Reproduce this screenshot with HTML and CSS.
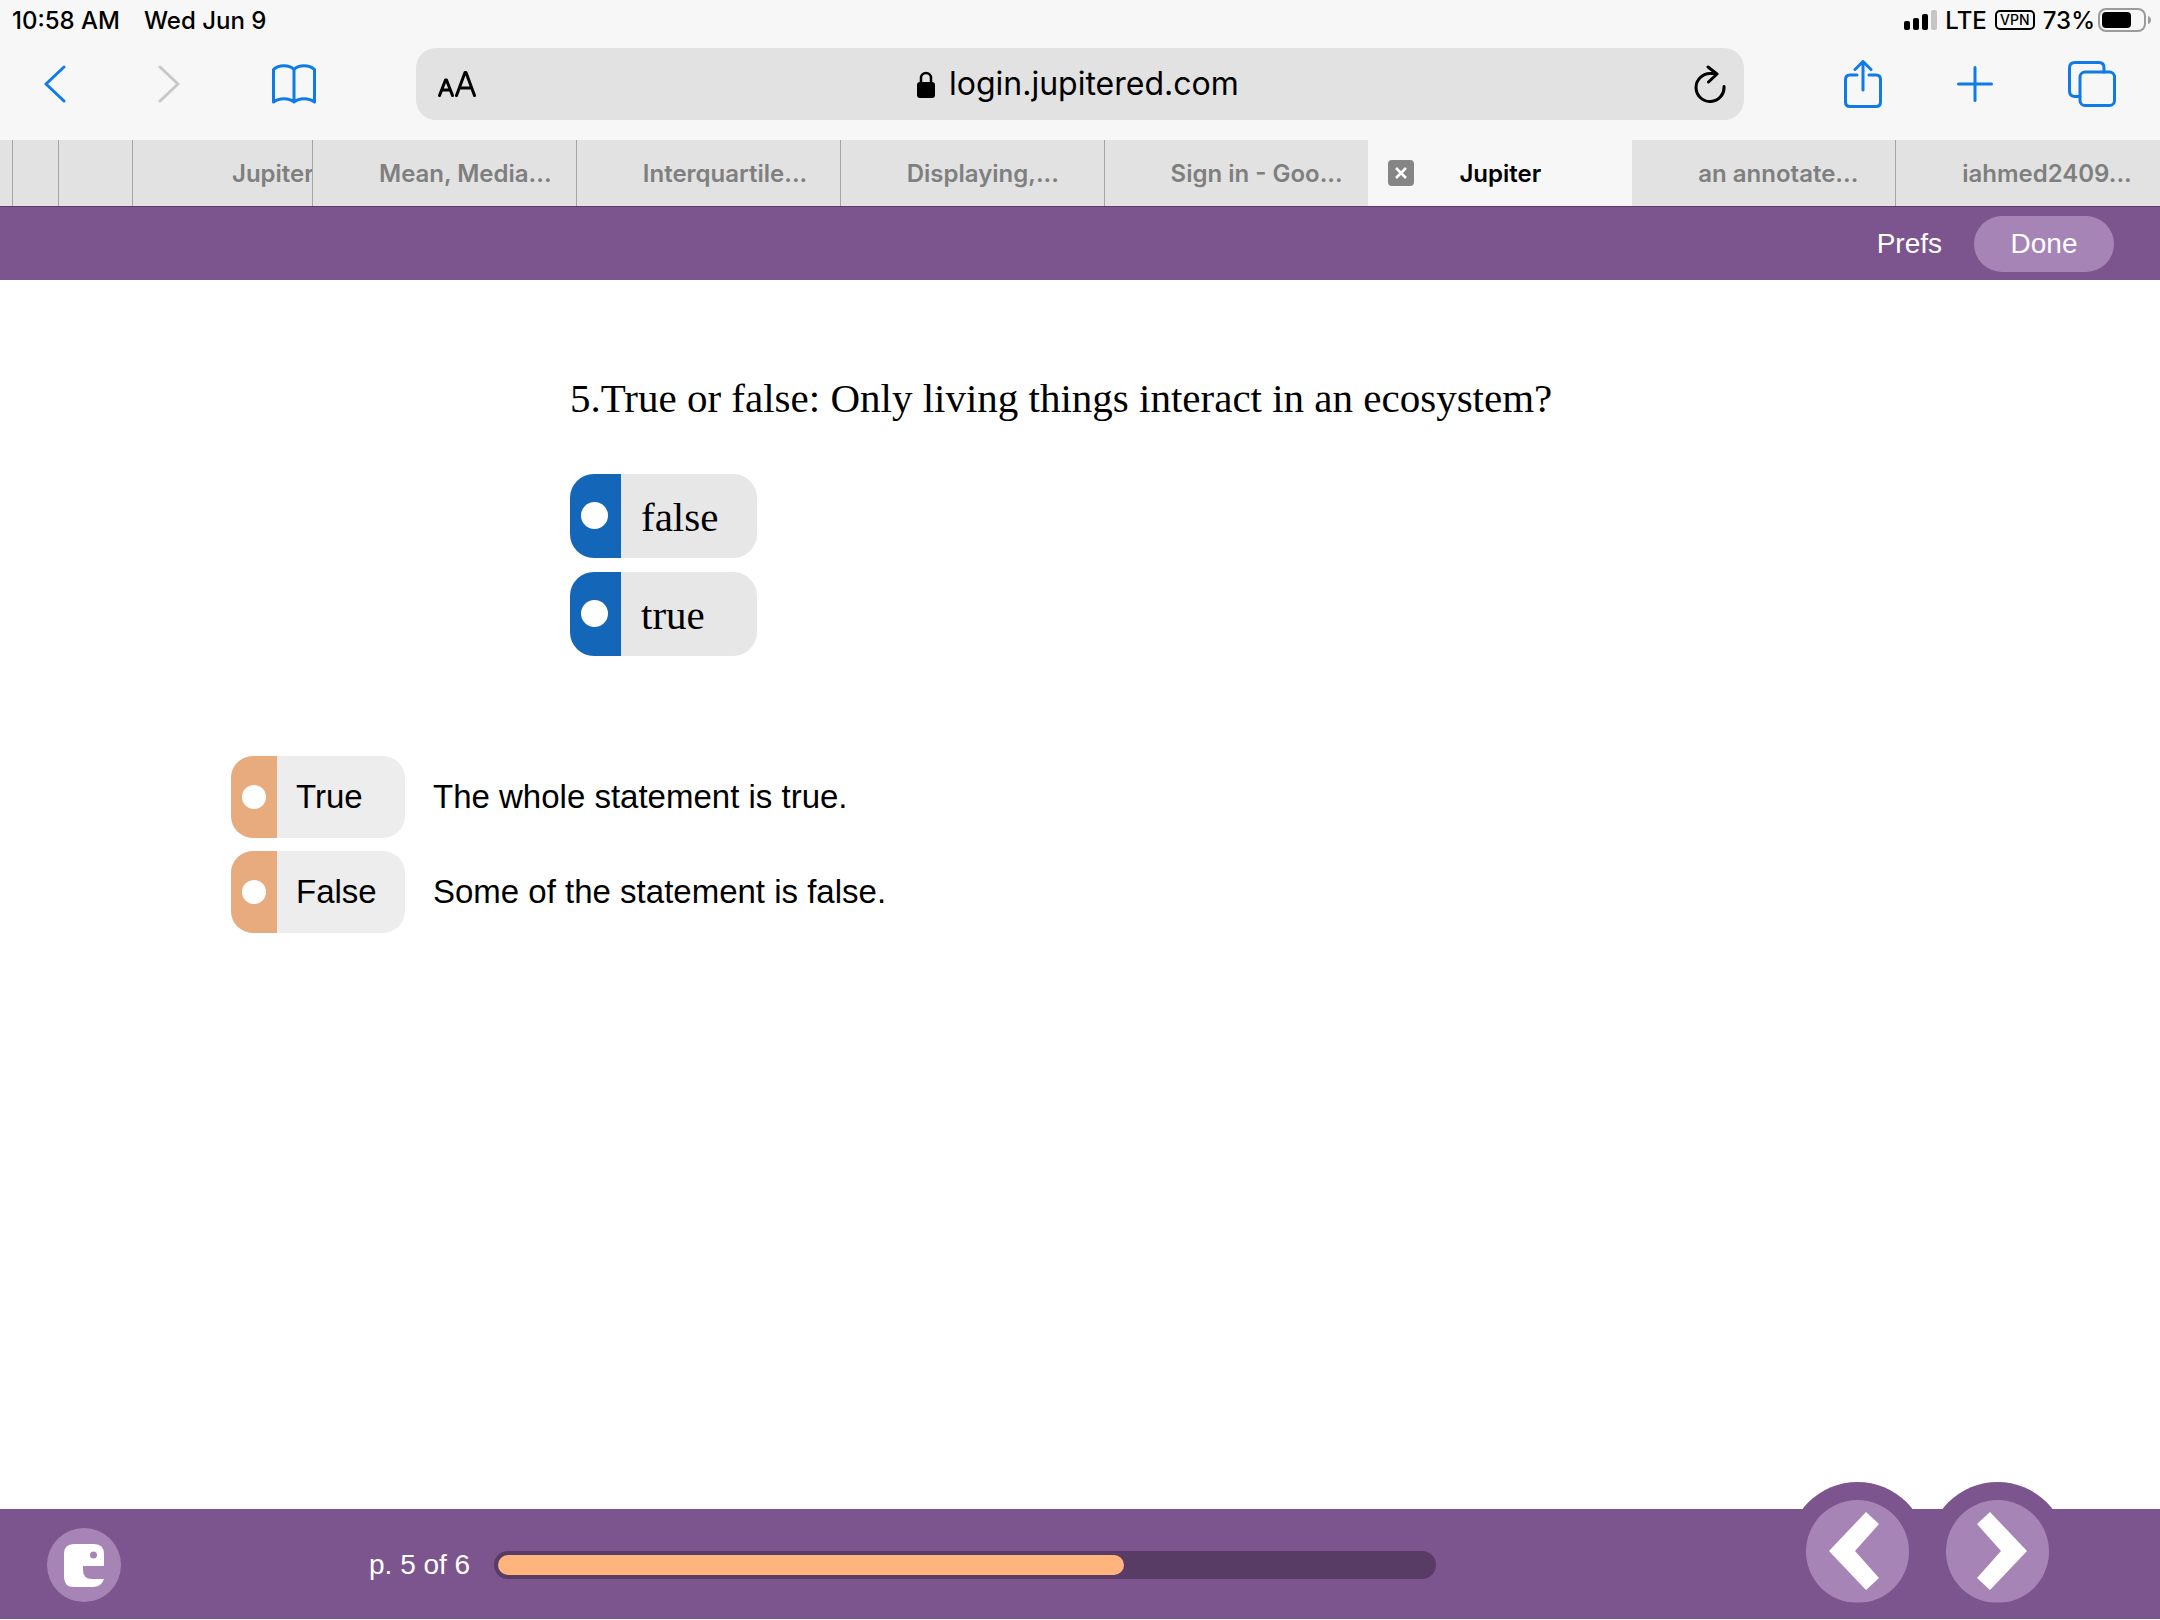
FILE: index.html
```html
<!DOCTYPE html>
<html lang="en">
<head>
<meta charset="utf-8">
<title>Jupiter</title>
<link rel="stylesheet" href="styles.css">
</head>
<body>
<div class="app">
  <div class="status">
    <span>10:58 AM</span>
    <span class="date">Wed Jun 9</span>
    <div class="indicators">
      <svg class="signal" width="33" height="20" viewBox="0 0 33 20" aria-hidden="true">
        <rect x="0" y="11" width="6" height="9" rx="2"/><rect x="9" y="8" width="6" height="12" rx="2"/><rect x="18" y="4" width="6" height="16" rx="2"/><rect x="27" y="0" width="6" height="20" rx="2" fill="#c5c5c6"/>
      </svg>
      <span class="lte">LTE</span>
      <span class="vpn">VPN</span>
      <span>73%</span>
      <svg class="battery" width="54" height="24" viewBox="0 0 54 24" aria-hidden="true">
        <rect x="1" y="1" width="46" height="22" rx="7" fill="none" stroke="#9b9b9c" stroke-width="2"/><rect x="4" y="4" width="29" height="16" rx="4"/><path d="M50 8q3 1 3 4t-3 4z" fill="#9b9b9c"/>
      </svg>
    </div>
  </div>

  <div class="toolbar">
    <button class="icon back" aria-label="Back"><svg width="22" height="38" viewBox="0 0 22 38"><path d="M20 2 2 19l18 17"/></svg></button>
    <button class="icon forward" aria-label="Forward"><svg width="22" height="38" viewBox="0 0 22 38"><path d="m2 2 18 17L2 36"/></svg></button>
    <button class="icon book" aria-label="Bookmarks"><svg width="44" height="40" viewBox="0 0 44 40"><path d="M22 5.500C17 .5 7 .5 1.500 5.500V38C7 33.500 17 33.500 22 38 27 33.500 37 33.500 42.500 38V5.500C37 .5 27 .5 22 5.500V38"/></svg></button>
    <div class="address">
      <button class="icon reader" aria-label="Text size"><svg width="38" height="26" viewBox="0 0 38 26"><path d="M1.500 24.500 7.500 9h1l6 15.500M4 19h8"/><path d="M18.500 24.500 27 1.500h1l8.500 23M21.500 17h12"/></svg></button>
      <svg class="lock" width="18" height="27" viewBox="0 0 18 27" aria-hidden="true"><path d="M4 12V7a5 5 0 0 1 10 0v5" fill="none" stroke="#000" stroke-width="2.500"/><rect y="11" width="18" height="16" rx="3"/></svg>
      <input class="url" aria-label="Address" value="login.jupitered.com">
      <button class="icon reload" aria-label="Reload"><svg width="32" height="38" viewBox="0 0 32 38"><path d="M30 21.500A14 14 0 1 1 16 8.500h6.500M14 2l9 7-8.500 8"/></svg></button>
    </div>
    <button class="icon share" aria-label="Share"><svg width="38" height="48" viewBox="0 0 38 48"><path d="M13 15H6q-4.500 0-4.500 4.500V42q0 4.500 4.500 4.500h26q4.500 0 4.500-4.500V19.500Q36.500 15 32 15h-7M19 30V2M11 9.500 19 1.500l8 8"/></svg></button>
    <button class="icon plus" aria-label="New tab"><svg width="36" height="36" viewBox="0 0 36 36"><path d="M1.500 18h33M18 1.500v33"/></svg></button>
    <button class="icon all" aria-label="Show all tabs"><svg width="48" height="46" viewBox="0 0 48 46"><path d="M12 35.500H7Q1.500 35.500 1.500 30V7Q1.500 1.500 7 1.500h24Q36 1.500 36 7v4"/><rect x="12" y="11" width="34.500" height="33.500" rx="5"/></svg></button>
  </div>

  <nav class="tabs" aria-label="Open tabs">
    <span class="tab edge"></span>
    <span class="tab stack"></span>
    <span class="tab stack wide"></span>
    <a class="tab cut" href="#">Jupiter</a>
    <a class="tab" href="#">Mean, Media...</a>
    <a class="tab" href="#">Interquartile...</a>
    <a class="tab" href="#">Displaying,...</a>
    <a class="tab last" href="#">Sign in - Goo...</a>
    <div class="tab active"><button class="close" aria-label="Close tab"><svg width="26" height="26" viewBox="0 0 26 26"><rect width="26" height="26" rx="4" fill="#858585"/><path d="m8 8 10 10M18 8 8 18" stroke="#fff" stroke-width="2.500"/></svg></button><a href="#">Jupiter</a></div>
    <a class="tab" href="#">an annotate...</a>
    <a class="tab last" href="#">iahmed2409...</a>
  </nav>

  <header class="header">
    <a href="#">Prefs</a>
    <button class="done">Done</button>
  </header>

  <main class="content">
    <fieldset class="question">
      <legend>5.True or false: Only living things interact in an ecosystem?</legend>
      <label class="choice"><span class="mark"><input type="radio" name="sample"></span><span class="name">false</span></label>
      <label class="choice"><span class="mark"><input type="radio" name="sample"></span><span class="name">true</span></label>
    </fieldset>
    <div class="answers" role="radiogroup" aria-label="Answer">
      <label class="answer"><span class="choice"><span class="mark"><input type="radio" name="answer"></span><span class="name">True</span></span><span>The whole statement is true.</span></label>
      <label class="answer"><span class="choice"><span class="mark"><input type="radio" name="answer"></span><span class="name">False</span></span><span>Some of the statement is false.</span></label>
    </div>
  </main>

  <footer class="footer">
    <button class="logo" aria-label="Menu"><svg width="40" height="43" viewBox="0 0 40 43"><path fill="#fff" d="M10 0h20q10 0 10 10v12H19v4q0 9 9 9h12q-3 8-11 8H10Q0 43 0 33V10Q0 0 10 0z"/><circle cx="29.500" cy="11" r="3.500" fill="#a685b6"/></svg></button>
    <span class="page">p. 5 of 6</span>
    <div class="track" role="progressbar" aria-label="Progress" aria-valuenow="67"><div class="fill" style="width:67%"></div></div>
    <button class="turn prev" aria-label="Previous page"><svg width="50" height="78" viewBox="0 0 50 78"><path d="M37 0 50 12 26 39 50 66 37 78 0 39z"/></svg></button>
    <button class="turn next" aria-label="Next page"><svg width="50" height="78" viewBox="0 0 50 78"><path d="M13 0 0 12 24 39 0 66 13 78 50 39z"/></svg></button>
  </footer>
</div>
</body>
</html>
```
FILE: styles.css
```css
* { box-sizing: border-box; }

body {
  margin: 0;
  background: #fff;
  color: #000;
  font-family: "Liberation Sans", Arial, sans-serif;
}

button {
  padding: 0;
  border: 0;
  background: none;
  color: inherit;
  font: inherit;
}

a { color: inherit; text-decoration: none; }
svg { display: block; flex: none; }

.app {
  display: flex;
  flex-direction: column;
  min-height: 100vh;
  padding-bottom: 1px;
}

/* Browser chrome */
.status, .toolbar, .tabs {
  background: #f7f7f7;
  font-family: Inter, sans-serif;
}

.status {
  display: flex;
  align-items: center;
  gap: 24px;
  height: 40px;
  padding: 0 8px 0 12px;
  font-size: 24px;
  font-weight: 500;
}

.indicators {
  display: flex;
  align-items: center;
  margin-left: auto;
}

.lte { margin: 0 8px; }

.vpn {
  width: 40px;
  height: 20px;
  margin-right: 8px;
  border: 2px solid #000;
  border-radius: 5px;
  font-size: 14px;
  line-height: 16px;
  text-align: center;
}

.battery { margin-left: 3px; }

.toolbar {
  display: flex;
  align-items: center;
  height: 100px;
  padding: 0 44px 12px;
}

.icon svg {
  fill: none;
  stroke: #0f7be8;
  stroke-width: 3;
  stroke-linecap: round;
  stroke-linejoin: round;
}

.forward { margin-left: 92px; }
.forward svg { stroke: #c8c8c8; }
.book { margin-left: 92px; }

.address {
  display: flex;
  flex: 1;
  align-items: center;
  height: 72px;
  margin: 0 100px;
  padding: 0 18px 0 22px;
  border-radius: 20px;
  background: #e2e2e2;
}

.address .icon svg { stroke: #000; }
.lock { margin-left: auto; }
.reload { margin-left: auto; }

.url {
  width: 304px;
  margin-left: 14px;
  padding: 0;
  border: 0;
  background: none;
  font: 32px/40px Inter, sans-serif;
}

.plus, .all { margin-left: 75px; }

.tabs {
  display: flex;
  height: 66px;
  color: #7f7f7f;
  font-size: 24px;
  font-weight: 600;
  line-height: 68px;
  white-space: nowrap;
}

.tab {
  flex: 1 1 264px;
  overflow: hidden;
  padding-left: 66px;
  border-right: 1px solid #a5a5a5;
  background: #e2e2e2;
}

.edge { flex: none; width: 13px; padding: 0; }
.stack { flex: none; width: 46px; padding: 0; }
.wide { width: 74px; }
.cut { flex: none; width: 180px; padding-left: 99px; }
.last { border-right-color: transparent; }

.active {
  display: flex;
  gap: 45px;
  padding-left: 20px;
  border: 0;
  background: #f7f7f7;
  color: #000;
}

/* Lesson page */
.header {
  display: flex;
  align-items: center;
  justify-content: flex-end;
  gap: 32px;
  height: 74px;
  padding-right: 46px;
  border-top: 1px solid #583c66;
  background: #7c548e;
  color: #fff;
  font-size: 28px;
}

.done {
  width: 140px;
  height: 56px;
  border-radius: 28px;
  background: #a685b6;
}

.content { flex: 1; }

.question {
  display: flex;
  flex-direction: column;
  align-items: flex-start;
  gap: 14px;
  margin: 0;
  padding: 0 0 0 570px;
  border: 0;
  font: 41px/48px "Liberation Serif", "Times New Roman", serif;
}

.question legend {
  padding: 94px 0 52px;
}

.choice {
  display: flex;
  overflow: hidden;
  width: 174px;
  height: 82px;
  border-radius: 22px;
  background: #ededed;
}

.mark {
  display: flex;
  align-items: center;
  justify-content: center;
  width: 46px;
  background: #e8ab7d;
}

.mark input {
  width: 24px;
  height: 24px;
  margin: 0;
  border-radius: 50%;
  background: #fff;
  appearance: none;
}

.name { padding-left: 19px; line-height: 82px; }

.question .choice { width: 187px; height: 84px; border-radius: 24px; background: #e7e7e7; }
.question .mark { width: 51px; padding: 0 2px 2px 0; background: #1466b8; }
.question .mark input { width: 27px; height: 27px; }
.question .name { padding-left: 20px; line-height: 86px; }

.answers {
  display: flex;
  flex-direction: column;
  gap: 13px;
  padding: 100px 0 0 231px;
  font-size: 33px;
}

.answer {
  display: flex;
  align-items: center;
  gap: 28px;
}

.footer {
  display: flex;
  align-items: center;
  height: 110px;
  padding: 2px 111px 0 47px;
  background: #7c548e;
  color: #fff;
  font-size: 28px;
}

.logo {
  display: flex;
  align-items: center;
  justify-content: center;
  width: 74px;
  height: 74px;
  border-radius: 50%;
  background: #a685b6;
}

.page { margin: 0 24px 0 248px; }

.track {
  flex: 1;
  height: 28px;
  padding: 4px;
  border-radius: 14px;
  background: #593c65;
}

.fill {
  height: 20px;
  border-radius: 10px;
  background: #ffb47d;
}

/* The page buttons rise above the footer's top edge */
.turn {
  display: flex;
  align-items: center;
  justify-content: center;
  width: 103px;
  height: 103px;
  margin: 0 0 28px 37px;
  border-radius: 50%;
  background: #a685b6;
  box-shadow: 0 0 0 18px #7c548e;
  clip-path: inset(-18px -18px 0);
}

.prev { margin-left: 370px; padding-right: 8px; }
.next { padding-left: 8px; }
.turn svg { fill: #fff; }
```
